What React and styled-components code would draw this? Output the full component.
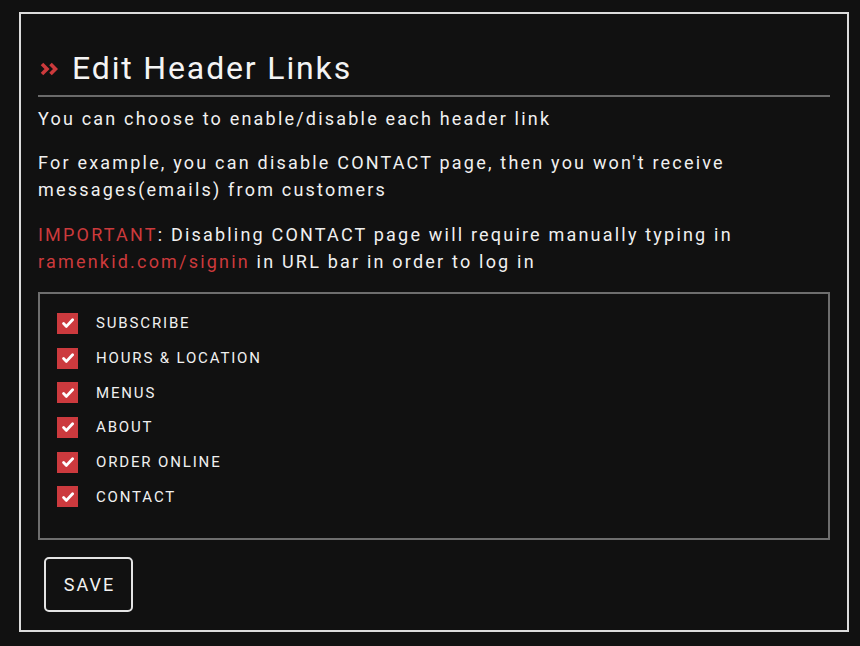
import React from "react";
import styled, { createGlobalStyle } from "styled-components";

const Global = createGlobalStyle`
  html, body { margin: 0; padding: 0; background: #111111; }
  body { font-family: Roboto, "Liberation Sans", sans-serif; color: #f2f2f2; }
`;

const Page = styled.div`
  padding: 12px 11px 14px 19px;
  background: #111111;
`;

const Panel = styled.section`
  width: 830px;
  box-sizing: border-box;
  border: 2px solid #dcdcdc;
  padding: 35px 17px 18px 17px;
`;

const Title = styled.h1`
  margin: 0;
  display: flex;
  align-items: center;
  gap: 14px;
  font-size: 32px;
  font-weight: 400;
  letter-spacing: 1.85px;
  line-height: 38px;
  padding: 0 0 8px 2px;
  border-bottom: 2px solid #6a6a6a;
  color: #f4f4f4;
`;

const ChevronIcon = styled.svg`
  flex: none;
  position: relative;
  top: 1px;
`;

const Para = styled.p`
  margin: ${(p) => p.$gap} 0 0 0;
  font-size: 18px;
  line-height: 27px;
  letter-spacing: 2.2px;
  color: #f0f0f0;
`;

const Red = styled.span`
  color: #cc3a3c;
`;

const Options = styled.div`
  margin-top: 17px;
  border: 2px solid #6e6e6e;
  padding: 12px 17px 24px 17px;
  display: flex;
  flex-direction: column;
`;

const Row = styled.label`
  display: flex;
  align-items: center;
  gap: 18px;
  height: 34.7px;
  font-size: 15px;
  letter-spacing: 1.85px;
  text-transform: uppercase;
  color: #f0f0f0;
`;

const Box = styled.span`
  width: 21px;
  height: 21px;
  background: #cc3a3e;
  display: inline-flex;
  align-items: center;
  justify-content: center;
  flex: none;
`;

const SaveButton = styled.button`
  margin: 17px 0 0 6px;
  width: 89px;
  height: 55px;
  background: transparent;
  border: 2px solid #e4e4e4;
  border-radius: 5px;
  color: #f2f2f2;
  font-family: Roboto, "Liberation Sans", sans-serif;
  font-size: 18px;
  letter-spacing: 2px;
  padding: 0 0 0 2px;
  cursor: pointer;
`;

const Check = () => (
  <svg width="12" height="10" viewBox="0 0 12 10">
    <path d="M1.6 5.6 L4.4 8.4 L10.6 1.8" fill="none" stroke="#fff" strokeWidth="2.8" strokeLinecap="round" strokeLinejoin="round" />
  </svg>
);

const Chevrons = () => (
  <ChevronIcon width="18" height="14" viewBox="0 0 18 14">
    <path d="M2 2 L7 7 L2 12 M10.5 2 L15.5 7 L10.5 12" fill="none" stroke="#cc3a3c" strokeWidth="3.6" strokeLinecap="butt" strokeLinejoin="miter" />
  </ChevronIcon>
);

const links = ["Subscribe", "Hours & Location", "Menus", "About", "Order Online", "Contact"];

export default function App() {
  return (
    <>
      <Global />
      <Page>
        <Panel>
          <Title>
            <Chevrons />
            Edit Header Links
          </Title>
          <Para $gap="8px">You can choose to enable/disable each header link</Para>
          <Para $gap="17px">
            For example, you can disable CONTACT page, then you won't receive messages(emails) from customers
          </Para>
          <Para $gap="18px">
            <Red>IMPORTANT</Red>: Disabling CONTACT page will require manually typing in{" "}
            <Red>ramenkid.com/signin</Red> in URL bar in order to log in
          </Para>
          <Options>
            {links.map((l) => (
              <Row key={l}>
                <Box>
                  <Check />
                </Box>
                {l}
              </Row>
            ))}
          </Options>
          <SaveButton>SAVE</SaveButton>
        </Panel>
      </Page>
    </>
  );
}
